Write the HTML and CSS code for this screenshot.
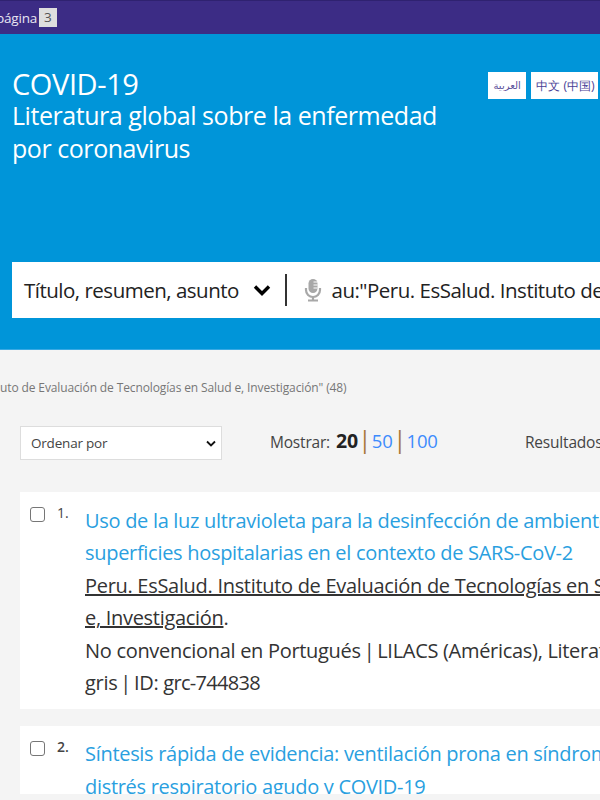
FILE: index.html
```html
<!DOCTYPE html>
<html lang="es">
<head>
<meta charset="utf-8">
<title>COVID-19</title>
<link rel="stylesheet" href="styles.css">
</head>
<body>
<div class="topbar"><span class="skip">página</span><kbd class="key">3</kbd></div>
<header class="hero">
  <div class="hero-top">
    <div class="brand">
      <div class="brand-title">COVID-19</div>
      <div class="brand-sub">Literatura global sobre la enfermedad<br>por coronavirus</div>
    </div>
    <div class="langs">
      <span class="lang lang-ar" lang="ar">العربية</span>
      <span class="lang">中文 (中国)</span>
    </div>
  </div>
  <div class="search">
    <span class="search-field">Título, resumen, asunto</span>
    <svg class="chevron" viewBox="0 0 18 12" width="18" height="12"><path d="M2 2.500l7 7 7-7" fill="none" stroke="#000" stroke-width="3.400"/></svg>
    <span class="divider"></span>
    <svg class="mic" viewBox="0 0 18 24" width="18" height="24"><rect x="4.500" y="1" width="9" height="14" rx="4.500" fill="#a8a8a8"/><path d="M9.500 4H13.500M9.500 7H13.500M9.500 10H13.500" stroke="#fff" stroke-width="1"/><path d="M2 10v2a7 7 0 0 0 14 0v-2" fill="none" stroke="#a8a8a8" stroke-width="2.200"/><path d="M9 19v3M4 22.500h10" fill="none" stroke="#a8a8a8" stroke-width="2.200"/></svg>
    <span class="query">au:"Peru. EsSalud. Instituto de Evaluación de Tecnologías en Salud e, Investigación"</span>
  </div>
</header>
<main class="main">
  <p class="crumb">uto de Evaluación de Tecnologías en Salud e, Investigación" (48)</p>
  <div class="tools">
    <div class="sort"><span>Ordenar por</span><svg viewBox="0 0 10 7" width="10" height="7"><path d="M1 1.500l4 4 4-4" fill="none" stroke="#111" stroke-width="1.800"/></svg></div>
    <div class="show"><span>Mostrar:</span><b class="show-on">20</b><span class="sep">|</span><a class="show-link">50</a><span class="sep">|</span><a class="show-link">100</a></div>
    <div class="results">Resultados 1 - 20 de 48</div>
  </div>
  <article class="card">
    <span class="check"></span>
    <span class="num">1.</span>
    <div class="body">
      <a class="title">Uso de la luz ultravioleta para la desinfección de ambientes y</a>
      <a class="title">superficies hospitalarias en el contexto de SARS-CoV-2</a>
      <div class="line"><u>Peru. EsSalud. Instituto de Evaluación de Tecnologías en Salud</u></div>
      <div class="line"><u>e, Investigación</u>.</div>
      <div class="line">No convencional en Portugués <span class="pipe">|</span> LILACS (Américas), Literatura</div>
      <div class="line">gris <span class="pipe">|</span> ID: <span class="id">grc-744838</span></div>
    </div>
  </article>
  <article class="card card-cut">
    <span class="check"></span>
    <span class="num num-b">2.</span>
    <div class="body">
      <a class="title">Síntesis rápida de evidencia: ventilación prona en síndrome de</a>
      <a class="title">distrés respiratorio agudo y COVID-19</a>
    </div>
  </article>
</main>
</body>
</html>
```

FILE: styles.css
```css
* { box-sizing: border-box; }
html, body { margin: 0; height: 800px; overflow: hidden; }
body { width: 600px; font-family: "Open Sans", sans-serif; background: #f4f4f4; color: #333; }
.topbar { height: 34px; background: #3c2c85; border-top: 1px solid #2f2270; display: flex; align-items: center; margin-left: -4px; color: #e8e6f2; font-size: 13.500px; letter-spacing: -0.200px; gap: 2px; }
.key { font: inherit; background: #dedede; color: #555; padding: 0 5px; height: 19px; line-height: 19px; }
.hero { height: 316px; background: #0095d9; padding: 35px 0 0 12px; border-bottom: 1px solid #39a9e3; }
.hero-top { display: flex; height: 193px; }
.brand { width: 476px; color: #fff; flex: none; }
.brand-title { font-size: 29px; line-height: 29px; letter-spacing: -0.400px; margin-bottom: 1px; }
.brand-sub { font-size: 25px; line-height: 33px; letter-spacing: -0.450px; }
.langs { display: flex; gap: 5px; padding-top: 3px; flex: none; }
.lang { background: #fff; height: 27px; line-height: 27px; padding: 0 3px 0 5px; font-size: 12.200px; color: #4a3f96; white-space: nowrap; }
.lang-ar { font-family: "DejaVu Sans", sans-serif; font-size: 10px; padding: 0 5.500px; color: #5a4f9a; }
.search { height: 56px; width: 900px; background: #fff; display: flex; align-items: center; color: #222; font-size: 20.500px; letter-spacing: -0.500px; white-space: nowrap; padding-bottom: 1px; }
.search-field { margin-left: 12px; width: 214px; flex: none; }
.chevron { margin-left: 15px; flex: none; }
.divider { width: 1.500px; height: 32px; background: #333; margin-left: 14px; flex: none; }
.mic { margin: 0 10px 0 17px; flex: none; }
.main { padding: 0 0 0 20px; }
.crumb { margin: 30px 0 0 -20px; font-size: 12px; line-height: 16px; letter-spacing: -0.120px; color: #777; white-space: nowrap; }
.tools { display: flex; align-items: center; margin-top: 30px; height: 34px; white-space: nowrap; font-size: 15.500px; letter-spacing: -0.200px; }
.sort { width: 202px; flex: none; height: 34px; background: #fff; border: 1px solid #ddd; display: flex; align-items: center; justify-content: space-between; padding: 0 5px 0 10px; color: #444; font-size: 13.500px; }
.show { margin: 0 0 5px 48px; width: 255px; flex: none; color: #444; display: flex; align-items: baseline; gap: 6px; }
.show-on { color: #222; font-size: 19.500px; }
.show-link { color: #3d8bfd; font-size: 18.500px; }
.sep { color: #a8773a; font-size: 24px; line-height: 24px; width: 2px; display: flex; justify-content: center; }
.results { color: #444; margin-bottom: 2px; }
.card { width: 800px; background: #fff; display: flex; margin-top: 17px; padding: 11px 10px 8.900px 10px; }
.tools + .card { margin-top: 32px; }
.card-cut { height: 68px; overflow: hidden; padding-bottom: 0; }
.check { width: 15px; height: 15px; border: 1.500px solid #767676; border-radius: 3px; background: #fff; margin-top: 4px; flex: none; }
.num { width: 40px; margin: 1px 0 0 12px; font-size: 14px; line-height: 18px; color: #444; flex: none; }
.num-b { font-weight: 600; }
.body { font-size: 20px; line-height: 32.600px; letter-spacing: -0.300px; white-space: nowrap; margin: 1.500px 0 0 -12px; }
.title { display: block; color: #2a9fdf; }
.line { color: #333; }
.pipe { margin: 0 -2px; }
.id { letter-spacing: -0.700px; }
```
